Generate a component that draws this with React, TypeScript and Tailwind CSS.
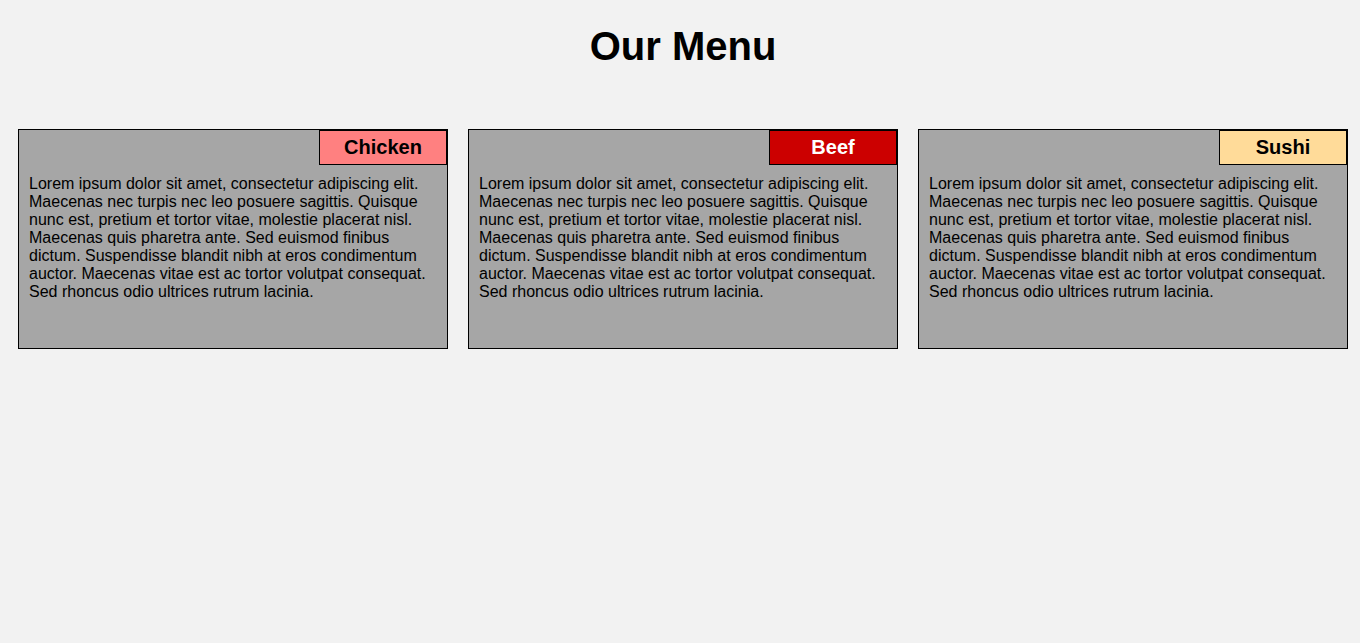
import React from "react";

const lorem =
  "Lorem ipsum dolor sit amet, consectetur adipiscing elit. Maecenas nec turpis nec leo posuere sagittis. Quisque nunc est, pretium et tortor vitae, molestie placerat nisl. Maecenas quis pharetra ante. Sed euismod finibus dictum. Suspendisse blandit nibh at eros condimentum auctor. Maecenas vitae est ac tortor volutpat consequat. Sed rhoncus odio ultrices rutrum lacinia.";

const items = [
  { name: "Chicken", badge: "bg-[#ff8080] text-black" },
  { name: "Beef", badge: "bg-[#cc0000] text-white" },
  { name: "Sushi", badge: "bg-[#ffdb99] text-black" },
];

export default function App() {
  return (
    <div className="min-h-screen bg-[#f2f2f2] font-['Liberation_Sans',Arial,sans-serif] text-black">
      <h1 className="pl-[6px] pt-[23px] text-center text-[40px] font-bold leading-[46px]">Our Menu</h1>

      <div className="mt-[60px] flex gap-5 pl-[18px]">
        {items.map((item) => (
          <div
            key={item.name}
            className="relative h-[220px] w-[430px] border border-black bg-[#a6a6a6] px-[10px] pt-[45px]"
          >
            {/* dish label sits in the top-right corner */}
            <div
              className={`absolute right-0 top-0 w-[128px] border border-black py-[5px] text-center text-[20px] font-bold leading-[23px] ${item.badge}`}
            >
              {item.name}
            </div>
            <p className="text-base leading-[18px]">{lorem}</p>
          </div>
        ))}
      </div>
    </div>
  );
}
